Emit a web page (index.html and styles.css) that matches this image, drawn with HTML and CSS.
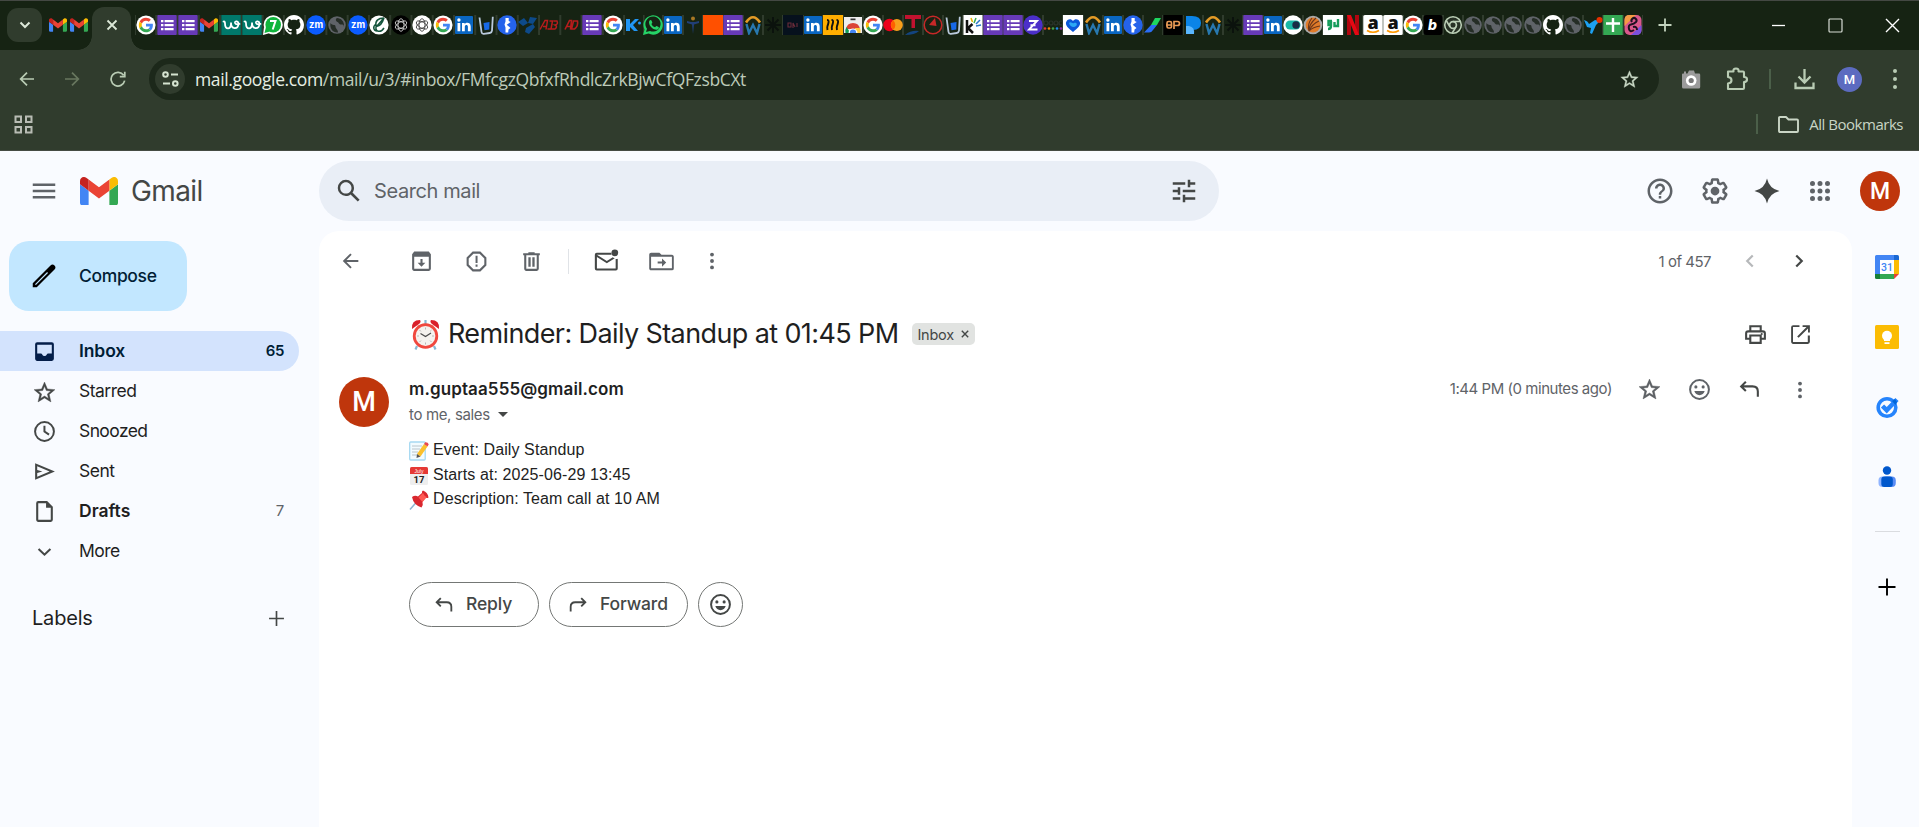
FILE: index.html
```html
<!DOCTYPE html>
<html lang="en">
<head>
<meta charset="utf-8">
<title>Reminder: Daily Standup at 01:45 PM - Gmail</title>
<link rel="stylesheet" href="styles.css">
</head>
<body>
<svg class="sprite" aria-hidden="true">
  <symbol id="gmail" viewBox="52 42 88 66"><path fill="#4285f4" d="M58 108h14V74L52 59v43c0 3.32 2.69 6 6 6"/><path fill="#34a853" d="M120 108h14c3.32 0 6-2.69 6-6V59l-20 15"/><path fill="#fbbc04" d="M120 48v26l20-15v-8c0-7.42-8.47-11.65-14.4-7.2"/><path fill="#ea4335" d="M72 74V48l24 18 24-18v26L96 92"/><path fill="#c5221f" d="M52 51v8l20 15V48l-5.6-4.2c-5.94-4.45-14.4-.22-14.4 7.2"/></symbol>
  <symbol id="f-gmail" viewBox="0 0 20 20"><use href="#gmail" x="1" y="2" width="18" height="16"/></symbol>
  <symbol id="f-google" viewBox="0 0 20 20"><circle cx="10" cy="10" r="9.6" fill="#fff"/><g transform="translate(2.8 2.8) scale(.3)"><path fill="#ea4335" d="M24 9.5c3.54 0 6.71 1.22 9.21 3.6l6.85-6.85C35.9 2.38 30.47 0 24 0 14.62 0 6.51 5.38 2.56 13.22l7.98 6.19C12.43 13.72 17.74 9.5 24 9.5z"/><path fill="#4285f4" d="M46.98 24.55c0-1.57-.15-3.09-.38-4.55H24v9.02h12.94c-.58 2.96-2.26 5.48-4.78 7.18l7.73 6c4.51-4.18 7.09-10.36 7.09-17.65z"/><path fill="#fbbc05" d="M10.53 28.59c-.48-1.45-.76-2.99-.76-4.59s.27-3.14.76-4.59l-7.98-6.19C.92 16.46 0 20.12 0 24c0 3.88.92 7.54 2.56 10.78l7.97-6.19z"/><path fill="#34a853" d="M24 48c6.48 0 11.93-2.13 15.89-5.81l-7.73-6c-2.15 1.45-4.92 2.3-8.16 2.3-6.26 0-11.57-4.22-13.47-9.91l-7.98 6.19C6.51 42.62 14.62 48 24 48z"/></g></symbol>
  <symbol id="f-forms" viewBox="0 0 20 20"><rect x=".3" width="19.4" height="20" rx=".8" fill="#673ab7"/><path fill="#fff" d="M4 5h2.4v2.2H4zM7.6 5h9v2.2h-9zM4 9h2.4v2.2H4zM7.6 9h9v2.2h-9zM4 13h2.4v2.2H4zM7.6 13h9v2.2h-9z"/></symbol>
  <symbol id="f-teal" viewBox="0 0 20 20"><rect x=".3" width="19.4" height="20" fill="#00796b"/><path fill="none" stroke="#fff" stroke-width="1.8" stroke-linecap="round" d="M2.500 6.500q1.500-.5 1.500 2c0 6.500 6 6.500 6 .5V7.500c0 7.500 7 7 7.500 1.500.2-3-4-3.500-3.500-1q.8 2 4.500 1"/></symbol>
  <symbol id="f-seven" viewBox="0 0 20 20"><circle cx="10.2" cy="9.8" r="9.6" fill="#fff"/><path fill="#fff" d="M1 12L0 20l7-2z"/><circle cx="10.2" cy="9.8" r="7.8" fill="#10b53c"/><path fill="#10b53c" d="M3 12l-1.500 6 5.500-1.500z"/><path fill="none" stroke="#fff" stroke-width="2" d="M7 6h5.500l-2.800 8.500"/></symbol>
  <symbol id="f-github" viewBox="0 0 16 16"><path fill="#fff" d="M8 0C3.58 0 0 3.58 0 8c0 3.54 2.29 6.53 5.47 7.59.4.07.55-.17.55-.38 0-.19-.01-.82-.01-1.49-2.01.37-2.53-.49-2.69-.94-.09-.23-.48-.94-.82-1.13-.28-.15-.68-.52-.01-.53.63-.01 1.08.58 1.23.82.72 1.21 1.87.87 2.33.66.07-.52.28-.87.51-1.07-1.78-.2-3.64-.89-3.64-3.95 0-.87.31-1.59.82-2.15-.08-.2-.36-1.02.08-2.12 0 0 .67-.21 2.2.82.64-.18 1.32-.27 2-.27s1.36.09 2 .27c1.53-1.04 2.2-.82 2.2-.82.44 1.1.16 1.92.08 2.12.51.56.82 1.27.82 2.15 0 3.07-1.87 3.75-3.65 3.95.29.25.54.73.54 1.48 0 1.07-.01 1.93-.01 2.2 0 .21.15.46.55.38A8.013 8.013 0 0016 8c0-4.42-3.58-8-8-8z"/></symbol>
  <symbol id="f-zm" viewBox="0 0 20 20"><circle cx="10" cy="10" r="9.7" fill="#0b5cff"/><text x="10" y="13.2" text-anchor="middle" font-family="Inter" font-size="9.5" font-weight="700" fill="#fff">zm</text></symbol>
  <symbol id="f-globe" viewBox="0 0 20 20"><circle cx="10" cy="10" r="8.8" fill="#5f6368"/><path fill="#252d26" d="M3.500 8c2 3 5 1 5 3.500S11 14 11 17.500c-5 .5-8.500-4-7.500-9.500zM10 3c-2 1-1 3.500.5 4s1 2.500 4 2.500 2 2 2.500 2C17.500 6.500 14 3 10 3z"/></symbol>
  <symbol id="f-leaf" viewBox="0 0 20 20"><circle cx="10" cy="10" r="9.6" fill="#fff"/><path fill="none" stroke="#15553d" stroke-width="1.5" d="M15 3c-6 0-9 3-8 8 4 1 6-2 8-8L7 12c-1 5 5 6 8 1M7 9c-4 3-2 7 1 7"/></symbol>
  <symbol id="knot" viewBox="0 0 20 20"><g fill="none" stroke="currentColor" stroke-width=".8"><ellipse cx="10" cy="10" rx="3" ry="6.3"/><ellipse cx="10" cy="10" rx="3" ry="6.3" transform="rotate(60 10 10)"/><ellipse cx="10" cy="10" rx="3" ry="6.3" transform="rotate(120 10 10)"/></g></symbol>
  <symbol id="f-ai-dark" viewBox="0 0 20 20"><circle cx="10" cy="10" r="9.7" fill="#000"/><use href="#knot" color="#ddd"/></symbol>
  <symbol id="f-ai-light" viewBox="0 0 20 20"><circle cx="10" cy="10" r="9.7" fill="#fff"/><use href="#knot" color="#333"/></symbol>
  <symbol id="f-in" viewBox="0 0 20 20"><rect x="1" y="1" width="18" height="18" rx="1" fill="#0a66c2"/><path fill="#fff" d="M3.500 8h2.800v8.300H3.500zM8 8h2.700v1.200c1.300-2.100 6-2 6 2.200v4.900h-2.800v-4.500c0-2.400-3.100-2.200-3.100 0v4.500H8z"/><circle cx="4.9" cy="5" r="1.7" fill="#fff"/></symbol>
  <symbol id="f-book" viewBox="0 0 20 20"><path fill="none" stroke="#b9c9dc" stroke-width="1.8" d="M3.500 2.500L5.500 17q.3 2 2.300 1.800l6-.8q2-.3 2.200-2.300l.8-14"/><path fill="#1769e8" d="M7.500 8l6-1-.2 7.500-4.800.8z"/></symbol>
  <symbol id="f-kcircle" viewBox="0 0 20 20"><circle cx="10" cy="10" r="9.7" fill="#2563eb"/><path fill="#fff" d="M8.500 3h3.200v3l2 1-4 2.700 3.800 3.300-2 1.500-.3 3H8.500v-5l-1-3 1-3z"/></symbol>
  <symbol id="f-shard" viewBox="0 0 20 20"><path fill="#0d4a8a" d="M0 7l6-4 4 5-5 3zM12 2l7 1-4 6-5-1zM8 13l7-4 2 3-6 7-4-2z"/></symbol>
  <symbol id="f-redone" viewBox="0 0 20 20"><g fill="none" stroke="#b71c1c" stroke-width="1.5"><path d="M1 14.500L6 5.500h2.500l-1.500 9M4 11.500h4M10.500 6h3l-1.500 8H8.500M14.500 6h3.500q1.500 3.500-2 4 3 1.500 0 4h-3.500"/></g></symbol>
  <symbol id="f-redtwo" viewBox="0 0 20 20"><g fill="none" stroke="#b71c1c" stroke-width="1.6"><path d="M4 14.500L8.500 5.500H10.500l-1 9M6 11.500h4M12.500 6l-2 8h3q4-3 3-8z"/></g></symbol>
  <symbol id="f-k" viewBox="0 0 20 20"><path fill="#2196f3" d="M2 4h4v5l5-5h4L9 10l5 6H10l-4-4v4H2z"/><circle cx="15.5" cy="8" r="1.5" fill="#2196f3"/></symbol>
  <symbol id="f-wa" viewBox="0 0 20 20"><path fill="#25d366" d="M0 20l1.500-5.500A9.700 9.700 0 1 1 5.600 18.600z"/><path fill="#162313" d="M3 17l1-3.300A7.600 7.600 0 1 1 7 16z"/><path fill="#25d366" d="M6.200 6c1-1.500 2-1.300 2.400-.2l.7 1.600c.2.700-1 1.300-.9 1.600 1 1.900 2 2.700 3.600 3.300.5.100 1-1.400 1.600-1.200l2 1c.8.300-.1 2.500-1.700 2.700C9.500 15 5 10 6.200 6z"/></symbol>
  <symbol id="f-person" viewBox="0 0 20 20"><circle cx="10" cy="3.5" r="2" fill="#a97824"/><path fill="#213f78" d="M4 6l4 1h4l4-1v2l-5 1.500L10 19 9 9.500 4 8z"/></symbol>
  <symbol id="f-orange" viewBox="0 0 20 20"><path fill="#ff5000" d="M0 0h20v20H0z"/></symbol>
  <symbol id="f-w" viewBox="0 0 20 20"><path fill="none" stroke="#e39a26" stroke-width="2.6" d="M3 7.500Q10-3 17 7.500"/><path fill="none" stroke="#2878ae" stroke-width="2.4" d="M3.500 9l2.500 9 4-8 4 8 2.500-9"/></symbol>
  <symbol id="f-star8" viewBox="0 0 20 20"><path stroke="#0b120d" stroke-width="2" d="M10 2v16M2 10h16M4.500 4.500l11 11M15.500 4.500l-11 11"/></symbol>
  <symbol id="f-navy" viewBox="0 0 20 20"><path fill="#06111d" d="M0 0h20v20H0z"/><path stroke="#6b2c3a" stroke-width="1.1" fill="none" d="M5 8h3v4H5zM10 13V8l2 4M14 8v4"/></symbol>
  <symbol id="f-yellow" viewBox="0 0 20 20"><path fill="#ffae00" d="M0 0h20v20H0z"/><path fill="none" stroke="#111" stroke-width="1.9" d="M4 5q2 0 1.500 2.500T4.500 11t0 4M8.500 5q2 0 1.500 2.500T9 11t0 4M13.500 5q2 0 1.500 2.500t-1 3.500 0 4"/></symbol>
  <symbol id="f-store" viewBox="0 0 20 20"><path fill="#eee" d="M1 2h18v16H1z"/><path fill="#333" d="M7.500 3.500h5v1.700h-5z"/><path fill="#db4437" d="M3 14q1-6 7-6t7 6z"/><path fill="#0f9d58" d="M2.500 18q-.5-4 1-6l4 6z"/><path fill="#ffcd40" d="M17.500 18q.5-3-.5-5h-5v5z"/><path fill="#fff" d="M5.500 18a4.500 4.500 0 0 1 9 0z"/><path fill="#4285f4" d="M6.800 18a3.200 3.400 0 0 1 6.400 0z"/></symbol>
  <symbol id="f-mc" viewBox="0 0 20 20"><circle cx="6.5" cy="10" r="6.2" fill="#eb001b"/><circle cx="13.8" cy="10" r="6" fill="#f79e1b"/><path fill="#ff5f00" d="M10.100 5.300a6 6 0 0 1 0 9.400 6 6 0 0 1 0-9.400z"/></symbol>
  <symbol id="f-t" viewBox="0 0 20 20"><path fill="#c1122f" d="M2 0h16v4h-6v9H8.500V4H2z"/><path fill="#13447f" d="M2 20q6-5 14-4-4 4-14 4z"/></symbol>
  <symbol id="f-dial" viewBox="0 0 20 20"><circle cx="10" cy="10" r="8.8" fill="none" stroke="#c62828" stroke-width="1.5"/><path fill="#c62828" d="M6 10l6-7 1.500 8z"/></symbol>
  <symbol id="f-kwhite" viewBox="0 0 20 20"><path fill="#fff" d="M.5 0h19v20H.500z"/><path fill="none" stroke="#111" stroke-width="2.5" d="M4 5v13M9.500 9L5 13l5 5"/><path stroke="#e8b400" stroke-width="1.5" d="M8 3l1.500 4"/><path stroke="#36a852" stroke-width="1.5" d="M13 3l-2 5"/><path stroke="#2b77c9" stroke-width="1.5" d="M17 5l-4 4M18 10l-5 1"/></symbol>
  <symbol id="f-z" viewBox="0 0 20 20"><circle cx="10" cy="10" r="9.7" fill="#4b2fc9"/><path fill="none" stroke="#fff" stroke-width="1.9" d="M6 6h8l-8 8.500h8.500M7.500 10.200h5"/></symbol>
  <symbol id="f-dots" viewBox="0 0 20 20"><g fill="none" stroke="#2b332b" stroke-width="1.2"><circle cx="3" cy="8" r="2"/><circle cx="8" cy="8" r="2"/><circle cx="13" cy="8" r="2"/><circle cx="18" cy="8" r="2"/></g><circle cx="2" cy="13.5" r="1.3" fill="#e53935"/><circle cx="6" cy="13.5" r="1.3" fill="#fb8c00"/><circle cx="10" cy="13.5" r="1.3" fill="#43a047"/><circle cx="14" cy="13.5" r="1.3" fill="#1e88e5"/><circle cx="18" cy="13.5" r="1.3" fill="#8e24aa"/></symbol>
  <symbol id="f-heart" viewBox="0 0 20 20"><path fill="#fff" d="M0 0h20v20H0z"/><path fill="#0b57d9" d="M10 17C5 13 2.500 10.500 3 7.500 3.800 4 8 3 10 6c2-3 6.200-2 7 1.500.5 3-2 5.500-7 9.500z"/><path fill="#2ba8f5" d="M6 8c2-2 3 1 5 0s4 1 2 3-6 1-7-3z"/></symbol>
  <symbol id="f-slash" viewBox="0 0 20 20"><path fill="#1ed760" d="M12 3h6l-4 7H8z"/><path fill="#2a6df4" d="M8 10h6l-4 5q-1.500 2.500-4 2.500H1z"/></symbol>
  <symbol id="f-op" viewBox="0 0 20 20"><path fill="#000" d="M.3 0h19.400v20H.300z"/><g fill="none" stroke="#e89a55" stroke-width="1.7"><rect x="4" y="6.5" width="4.5" height="6.5" rx="1.5"/><path d="M11 14V6.500h3.500q2 0 2 2t-2 2H11M3 10h6"/></g></symbol>
  <symbol id="f-drop" viewBox="0 0 20 20"><path fill="#0b84e8" d="M3 1h6q9 0 9 7t-8 7H3z"/><path fill="#5ab7ff" d="M3 11h3q6 1 5 8H3z"/></symbol>
  <symbol id="f-toggle" viewBox="0 0 20 20"><circle cx="10" cy="10" r="9.7" fill="#fff"/><rect x="2.5" y="5.5" width="15" height="9" rx="4.5" fill="#19b8a6"/><circle cx="13" cy="10" r="3.7" fill="#182c45"/></symbol>
  <symbol id="f-ball" viewBox="0 0 20 20"><circle cx="10" cy="10" r="9.3" fill="#aaa"/><circle cx="10" cy="10" r="7.4" fill="#e17b29"/><path fill="none" stroke="#6c371a" stroke-width="1.1" d="M6 16Q6 9 13 3M6 16Q9 9 16 6M6 16q4-4 11-5M6 16Q4 9 9 3"/></symbol>
  <symbol id="f-ga" viewBox="0 0 20 20"><path fill="#fff" d="M0 0h20v20H0z"/><path fill="none" stroke="#159c5b" stroke-width="2.4" d="M9 6H5.500v4H8V6v5q0 3-3 3M15 4v7h-3.500V7"/></symbol>
  <symbol id="f-n" viewBox="0 0 20 20"><path fill="#b1060f" d="M4 0h4v20H4zM12 0h4v20h-4z"/><path fill="#e50914" d="M4 0h4l8 20h-4z"/></symbol>
  <symbol id="f-a" viewBox="0 0 20 20"><rect x=".3" width="19.4" height="20" rx="1.5" fill="#fff"/><text x="10" y="14" text-anchor="middle" font-family="Open Sans" font-weight="800" font-size="18" fill="#111">a</text><path fill="none" stroke="#f90" stroke-width="1.7" d="M4 15.500q6 3.500 12 0"/></symbol>
  <symbol id="f-b" viewBox="0 0 20 20"><rect x=".5" width="19" height="20" rx="3" fill="#000"/><text x="9.5" y="15" text-anchor="middle" font-family="Inter" font-style="italic" font-weight="800" font-size="14" fill="#fff">b</text></symbol>
  <symbol id="f-chrome" viewBox="0 0 20 20"><circle cx="10" cy="10" r="8.3" fill="#263024" stroke="#b9ccb4" stroke-width="1.6"/><circle cx="10" cy="10" r="3.4" fill="none" stroke="#b9ccb4" stroke-width="1.7"/><path stroke="#b9ccb4" stroke-width="1.6" d="M10 6.500h7.500M7 11.800L3.200 5.500M13 11.800L9.200 18"/></symbol>
  <symbol id="f-bird" viewBox="0 0 20 20"><path fill="#1da1f2" d="M1 5q4 1 5 4l6-4 5 1-4 4-4 9-2-1 1-5-4-1z"/><circle cx="16.5" cy="5" r="3" fill="#e53000"/></symbol>
  <symbol id="f-cross" viewBox="0 0 20 20"><path fill="#34a853" d="M.300 0h19.400v20H.300z"/><path stroke="#fff" stroke-width="2.4" d="M10 3v14M3 8.500h14"/></symbol>
  <symbol id="f-multi" viewBox="0 0 20 20"><rect x="1.5" width="17" height="20" rx="5" fill="#d9588c"/><path fill="#f59a45" d="M6 0h7L1.500 11V5Q1.500 0 6 0z"/><path fill="#7a50dd" d="M18.500 10v5q0 5-5 5H8z"/><path fill="none" stroke="#1c1020" stroke-width="2" d="M9 7a2.500 2.500 0 1 1 4 0q-2 2-5 2.500t-2 4.500 5 1M10 12q4-1 4 3"/></symbol>

  <symbol id="star" viewBox="0 0 24 24"><path stroke="currentColor" stroke-width=".4" d="M22 9.240l-7.190-.62L12 2 9.190 8.630 2 9.240l5.460 4.730L5.820 21 12 17.270 18.180 21l-1.630-7.030L22 9.240zM12 15.400l-3.760 2.270 1-4.280-3.320-2.880 4.380-.38L12 6.100l1.710 4.040 4.380.38-3.320 2.880 1 4.280L12 15.400z"/></symbol>
  <symbol id="smile" viewBox="0 0 24 24"><path d="M12 2a10 10 0 1 0 0 20 10 10 0 0 0 0-20zm0 18.100a8.100 8.100 0 1 1 0-16.200 8.100 8.100 0 0 1 0 16.200z"/><circle cx="8.5" cy="9.5" r="1.5"/><circle cx="15.5" cy="9.5" r="1.5"/><path d="M7 13.500h10c-.8 2.400-2.600 4-5 4s-4.200-1.600-5-4z"/></symbol>
  <symbol id="reply" viewBox="0 0 24 24"><path fill="none" stroke="currentColor" stroke-width="2" d="M8.500 4.500L4 9l4.500 4.500M4 9h11q5 0 5 5v5"/></symbol>
  <symbol id="more" viewBox="0 0 24 24"><circle cx="12" cy="5" r="2.1"/><circle cx="12" cy="12" r="2.1"/><circle cx="12" cy="19" r="2.1"/></symbol>
  <symbol id="back" viewBox="0 0 24 24"><path fill="none" stroke="currentColor" stroke-width="2.1" d="M20 12H5M12 4.500L4.500 12l7.500 7.500"/></symbol>
  <symbol id="chev" viewBox="0 0 24 24"><path fill="none" stroke="currentColor" stroke-width="2.4" d="M9 6l6 6-6 6"/></symbol>
  <symbol id="plus" viewBox="0 0 24 24"><path fill="none" stroke="currentColor" stroke-width="1.9" d="M12 3.500v17M3.500 12h17"/></symbol>
</svg>

<div class="browser">
  <div class="tabstrip">
    <span class="tabmenu"><svg width="14" height="14" viewBox="0 0 14 14"><path fill="none" stroke="#dce8d8" stroke-width="2" d="M2.500 4.500L7 9l4.500-4.500"/></svg></span>
    <div class="pinned"><svg class="fav"><use href="#f-gmail"/></svg><svg class="fav"><use href="#f-gmail"/></svg></div>
    <div class="active"><svg width="12" height="12" viewBox="0 0 12 12"><path stroke="#dce8d8" stroke-width="1.8" d="M1.500 1.500l9 9M10.500 1.500l-9 9"/></svg></div>
    <div class="tabs wide">
      <svg class="fav"><use href="#f-google"/></svg><svg class="fav"><use href="#f-forms"/></svg><svg class="fav"><use href="#f-forms"/></svg><svg class="fav"><use href="#f-gmail"/></svg><svg class="fav"><use href="#f-teal"/></svg><svg class="fav"><use href="#f-teal"/></svg><svg class="fav"><use href="#f-seven"/></svg><svg class="fav"><use href="#f-github"/></svg><svg class="fav"><use href="#f-zm"/></svg><svg class="fav"><use href="#f-globe"/></svg><svg class="fav"><use href="#f-zm"/></svg><svg class="fav"><use href="#f-leaf"/></svg><svg class="fav"><use href="#f-ai-dark"/></svg><svg class="fav"><use href="#f-ai-light"/></svg><svg class="fav"><use href="#f-google"/></svg><svg class="fav"><use href="#f-in"/></svg><svg class="fav"><use href="#f-book"/></svg><svg class="fav"><use href="#f-kcircle"/></svg><svg class="fav"><use href="#f-shard"/></svg><svg class="fav"><use href="#f-redone"/></svg><svg class="fav"><use href="#f-redtwo"/></svg><svg class="fav"><use href="#f-forms"/></svg><svg class="fav"><use href="#f-google"/></svg><svg class="fav"><use href="#f-k"/></svg>
    </div>
    <div class="tabs narrow">
      <svg class="fav"><use href="#f-wa"/></svg><svg class="fav"><use href="#f-in"/></svg><svg class="fav"><use href="#f-person"/></svg><svg class="fav"><use href="#f-orange"/></svg><svg class="fav"><use href="#f-forms"/></svg><svg class="fav"><use href="#f-w"/></svg><svg class="fav"><use href="#f-star8"/></svg><svg class="fav"><use href="#f-navy"/></svg><svg class="fav"><use href="#f-in"/></svg><svg class="fav"><use href="#f-yellow"/></svg><svg class="fav"><use href="#f-store"/></svg><svg class="fav"><use href="#f-google"/></svg><svg class="fav"><use href="#f-mc"/></svg><svg class="fav"><use href="#f-t"/></svg><svg class="fav"><use href="#f-dial"/></svg><svg class="fav"><use href="#f-book"/></svg><svg class="fav"><use href="#f-kwhite"/></svg><svg class="fav"><use href="#f-forms"/></svg><svg class="fav"><use href="#f-forms"/></svg><svg class="fav"><use href="#f-z"/></svg><svg class="fav"><use href="#f-dots"/></svg><svg class="fav"><use href="#f-heart"/></svg><svg class="fav"><use href="#f-w"/></svg><svg class="fav"><use href="#f-in"/></svg><svg class="fav"><use href="#f-kcircle"/></svg><svg class="fav"><use href="#f-slash"/></svg><svg class="fav"><use href="#f-op"/></svg><svg class="fav"><use href="#f-drop"/></svg><svg class="fav"><use href="#f-w"/></svg><svg class="fav"><use href="#f-star8"/></svg><svg class="fav"><use href="#f-forms"/></svg><svg class="fav"><use href="#f-in"/></svg><svg class="fav"><use href="#f-toggle"/></svg><svg class="fav"><use href="#f-ball"/></svg><svg class="fav"><use href="#f-ga"/></svg><svg class="fav"><use href="#f-n"/></svg><svg class="fav"><use href="#f-a"/></svg><svg class="fav"><use href="#f-a"/></svg><svg class="fav"><use href="#f-google"/></svg><svg class="fav"><use href="#f-b"/></svg><svg class="fav"><use href="#f-chrome"/></svg><svg class="fav"><use href="#f-globe"/></svg><svg class="fav"><use href="#f-globe"/></svg><svg class="fav"><use href="#f-globe"/></svg><svg class="fav"><use href="#f-globe"/></svg><svg class="fav"><use href="#f-github"/></svg><svg class="fav"><use href="#f-globe"/></svg><svg class="fav"><use href="#f-bird"/></svg><svg class="fav"><use href="#f-cross"/></svg><svg class="fav"><use href="#f-multi"/></svg>
    </div>
    <svg class="newtab" viewBox="0 0 14 14"><path stroke="#c3d3be" stroke-width="1.8" d="M7 .5v13M.5 7h13"/></svg>
    <div class="winctl">
      <svg viewBox="0 0 16 16"><path stroke="#fff" stroke-width="1.3" d="M1.500 8.500h13"/></svg>
      <svg viewBox="0 0 16 16"><rect x="1.5" y="2" width="13" height="13" rx="1" fill="none" stroke="#d8ddd6" stroke-width="1.2"/></svg>
      <svg viewBox="0 0 16 16"><path stroke="#fff" stroke-width="1.4" d="M1.500 2l13 13M14.500 2l-13 13"/></svg>
    </div>
  </div>

  <div class="toolbar">
    <div class="nav">
      <svg viewBox="0 0 24 24" color="#b9ccb4"><path fill="none" stroke="currentColor" stroke-width="2.6" d="M22.500 12H3.500M12 2.500L2.500 12l9.500 9.500"/></svg>
      <svg viewBox="0 0 24 24" color="#68775f"><path fill="none" stroke="currentColor" stroke-width="2.6" d="M1.500 12h19M12 2.500l9.500 9.500-9.500 9.500"/></svg>
      <svg viewBox="0 0 24 24" color="#b9ccb4"><path fill="none" stroke="currentColor" stroke-width="2.6" d="M22 14.500A10.300 10.300 0 1 1 20.500 6.500M22.200 1v7.500h-7.500"/></svg>
    </div>
    <div class="omnibox">
      <span class="site"><svg width="17" height="16" viewBox="0 0 17 16" fill="none" stroke="#d5e3d0" stroke-width="2"><circle cx="3.5" cy="3.5" r="2.3"/><path d="M9 3.500h7M1 12.500h7"/><circle cx="13.3" cy="12.5" r="2.3"/></svg></span>
      <span class="url"><b>mail.google.com</b>/mail/u/3/#inbox/FMfcgzQbfxfRhdlcZrkBjwCfQFzsbCXt</span>
      <svg class="bookmark"><use href="#star"/></svg>
    </div>
    <div class="actions">
      <svg width="20" height="20" viewBox="0 0 20 20"><path fill="#9b9b9b" d="M1 5.500q0-1 1-1h1v-2h2v2h1.500L8 1.500h5l1 3h4q1.200 0 1.200 1.200V18q0 1.500-1.500 1.500H2.500Q1 19.500 1 18z"/><circle cx="10.2" cy="11.5" r="5.3" fill="#fff"/><circle cx="10.2" cy="11.5" r="2.6" fill="#777"/></svg>
      <svg width="22" height="24" viewBox="0 0 22 24"><path fill="none" stroke="#b9ccb4" stroke-width="2.1" stroke-linejoin="round" d="M2 4.500h5.500q-.5-3 2.500-3t2.500 3h4.500q1 0 1 1V10q3 0 3 2.500T18 15v6q0 1-1 1H2v-5.500q3.500-.5 3.500-3.300T2 10z"/></svg>
      <i class="vline"></i>
      <svg width="21" height="22" viewBox="0 0 21 22"><path fill="none" stroke="#b9ccb4" stroke-width="2.3" d="M10.500 1v13.500M4.500 8.500l6 6 6-6M1.500 14.500V20h18v-5.500"/></svg>
      <span class="profile">M</span>
      <svg width="20" height="22" viewBox="0 0 20 22" fill="#b9ccb4"><circle cx="10" cy="3" r="2"/><circle cx="10" cy="11" r="2"/><circle cx="10" cy="19" r="2"/></svg>
    </div>
  </div>

  <div class="bookmarks">
    <svg width="19" height="19" viewBox="0 0 19 19" fill="none" stroke="#b8bcb4" stroke-width="2"><path d="M1.500 1.500h5.500v5.500H1.500zM12 1.500h5.500v5.500H12zM1.500 12h5.500v5.500H1.500zM12 12h5.500v5.500H12z"/></svg>
    <i class="vline"></i>
    <svg class="folder" width="21" height="17" viewBox="0 0 21 17"><path fill="none" stroke="#c9d5c5" stroke-width="1.9" stroke-linejoin="round" d="M1 2q0-1 1-1h6l2.500 2.500H19q1 0 1 1V15q0 1-1 1H2q-1 0-1-1z"/></svg>
    <span class="allbm">All Bookmarks</span>
  </div>
</div>

<div class="app">
  <header class="top">
    <div class="brand">
      <svg class="i30 menu" viewBox="0 0 24 24"><path d="M3 18h18v-2H3v2zm0-5h18v-2H3v2zm0-7v2h18V6H3z"/></svg>
      <svg class="logo"><use href="#gmail"/></svg>
      <span class="wordmark">Gmail</span>
    </div>
    <div class="search">
      <svg class="i30" viewBox="0 0 24 24"><path d="M20.490 19l-5.730-5.730C15.530 12.200 16 10.910 16 9.500A6.500 6.500 0 1 0 9.500 16c1.410 0 2.700-.47 3.770-1.240L19 20.490 20.490 19zM5 9.500C5 7.010 7.010 5 9.500 5S14 7.010 14 9.500 11.990 14 9.500 14 5 11.990 5 9.500z"/></svg>
      <span>Search mail</span>
      <svg class="i30" viewBox="0 0 24 24"><path d="M3 17v2h6v-2H3zM3 5v2h10V5H3zm10 16v-2h8v-2h-8v-2h-2v6h2zM7 9v2H3v2h4v2h2V9H7zm14 4v-2H11v2h10zm-6-4h2V7h4V5h-4V3h-2v6z"/></svg>
    </div>
    <div class="hicons">
      <svg class="i30" viewBox="0 0 24 24"><path d="M11 18h2v-2h-2v2zm1-16C6.480 2 2 6.480 2 12s4.480 10 10 10 10-4.480 10-10S17.520 2 12 2zm0 18c-4.410 0-8-3.590-8-8s3.590-8 8-8 8 3.590 8 8-3.590 8-8 8zm0-14c-2.210 0-4 1.790-4 4h2c0-1.100.9-2 2-2s2 .9 2 2c0 2-3 1.750-3 5h2c0-2.250 3-2.500 3-5 0-2.210-1.790-4-4-4z"/></svg>
      <svg class="i30" viewBox="0 0 24 24"><path d="M13.850 22.250h-3.700c-.74 0-1.360-.54-1.450-1.270l-.27-1.890c-.27-.14-.53-.29-.79-.46l-1.800.72c-.7.26-1.470-.03-1.810-.65L2.200 15.530c-.35-.66-.2-1.440.36-1.880l1.530-1.190c-.01-.15-.02-.3-.02-.46 0-.15.01-.31.02-.46l-1.520-1.190c-.59-.45-.74-1.260-.37-1.880l1.850-3.190c.34-.62 1.110-.9 1.790-.63l1.810.73c.26-.17.52-.32.78-.46l.27-1.910c.09-.7.71-1.250 1.440-1.250h3.700c.74 0 1.360.54 1.450 1.270l.27 1.890c.27.14.53.29.79.46l1.800-.72c.71-.26 1.480.03 1.820.65l1.840 3.180c.36.66.2 1.440-.36 1.880l-1.520 1.190c.01.15.02.3.02.46s-.01.31-.02.46l1.520 1.190c.56.45.72 1.230.37 1.860l-1.860 3.220c-.34.62-1.110.9-1.800.63l-1.800-.72c-.26.17-.52.32-.78.46l-.27 1.910c-.1.68-.72 1.220-1.460 1.220zm-3.230-2h2.760l.37-2.550.53-.22c.44-.18.88-.44 1.340-.78l.45-.34 2.380.96 1.380-2.400-2.030-1.580.07-.56c.03-.26.06-.51.06-.78s-.03-.53-.06-.78l-.07-.56 2.030-1.580-1.390-2.400-2.390.96-.45-.35c-.42-.32-.87-.58-1.330-.77l-.52-.22-.37-2.550h-2.760l-.37 2.550-.53.210c-.44.190-.88.440-1.340.790l-.45.330-2.380-.95-1.390 2.390 2.030 1.580-.07.560a7 7 0 0 0-.06.790c0 .260.020.530.060.780l.070.560-2.030 1.580 1.380 2.400 2.390-.960.450.350c.430.330.860.580 1.330.770l.530.220.380 2.550z"/><circle cx="12" cy="12" r="3.5"/></svg>
      <svg class="i30 dark" viewBox="0 0 24 24"><path d="M12 2Q13.800 10.200 22 12q-8.200 1.800-10 10Q10.200 13.800 2 12 10.200 10.200 12 2z"/></svg>
      <svg class="i30" viewBox="0 0 24 24"><path d="M6 8a2 2 0 1 0 0-4 2 2 0 0 0 0 4zm6 12a2 2 0 1 0 0-4 2 2 0 0 0 0 4zm-6 0a2 2 0 1 0 0-4 2 2 0 0 0 0 4zm0-6a2 2 0 1 0 0-4 2 2 0 0 0 0 4zm6 0a2 2 0 1 0 0-4 2 2 0 0 0 0 4zm4-8a2 2 0 1 0 4 0 2 2 0 0 0-4 0zm-4 2a2 2 0 1 0 0-4 2 2 0 0 0 0 4zm6 6a2 2 0 1 0 0-4 2 2 0 0 0 0 4zm0 6a2 2 0 1 0 0-4 2 2 0 0 0 0 4z"/></svg>
      <span class="avatar small">M</span>
    </div>
  </header>

  <div class="main">
    <nav class="side">
      <button class="compose"><svg class="i30" viewBox="0 0 24 24"><path fill="#000" d="M20.400 3.600a2.300 2.300 0 0 0-3.200 0L3 17.800V21h3.200L20.400 6.800a2.300 2.300 0 0 0 0-3.200zM5.500 19.200l-.7-.7L14.500 8.800l.7.7z"/></svg><span>Compose</span></button>
      <a class="row current"><svg class="i25" viewBox="0 0 24 24"><path d="M19 3H5a2 2 0 0 0-2 2v14c0 1.100.9 2 2 2h14a2 2 0 0 0 2-2V5a2 2 0 0 0-2-2zm0 11h-3.500q-1 0-1.300.8a2.400 2.400 0 0 1-4.400 0Q9.500 14 8.500 14H5V5.500h14z"/></svg><span>Inbox</span><em>65</em></a>
      <a class="row"><svg class="i25 low"><use href="#star"/></svg><span>Starred</span></a>
      <a class="row"><svg class="i25" viewBox="0 0 24 24"><path d="M12 2a10 10 0 1 0 0 20 10 10 0 0 0 0-20zm0 18.100a8.100 8.100 0 1 1 0-16.200 8.100 8.100 0 0 1 0 16.200zM11 6.500v6l4.800 3.300 1.100-1.600-4-2.700v-5z"/></svg><span class="snoozed">Snoozed</span></a>
      <a class="row"><svg class="i25" viewBox="0 0 24 24"><path d="M3 4v16l19-8L3 4zm2 3l11.900 5L5 17v-3.500l5-1.500-5-1.500V7z"/></svg><span>Sent</span></a>
      <a class="row bold"><svg class="i25" viewBox="0 0 24 24"><path d="M14.500 2H6a2 2 0 0 0-2 2v16c0 1.100.9 2 2 2h12a2 2 0 0 0 2-2V7.500L14.500 2zM18 20H6V4h7.500v4.500H18V20z"/></svg><span>Drafts</span><em>7</em></a>
      <a class="row"><svg class="i25" viewBox="0 0 24 24"><path fill="none" stroke="currentColor" stroke-width="2" d="M6.300 9.500L12 15l5.700-5.500"/></svg><span>More</span></a>
      <div class="labels"><span>Labels</span><svg class="lplus"><use href="#plus"/></svg></div>
    </nav>

    <section class="panel">
      <div class="mailbar">
        <div class="left">
          <svg class="i22"><use href="#back"/></svg>
          <svg class="i25 gap" viewBox="0 0 24 24"><path d="M19 2.500H5L3 5v14c0 1.100.9 2 2 2h14a2 2 0 0 0 2-2V5zM5 19V7.500h14V19zm6-9.500v3.700H8.300L12 17l3.700-3.800H13V9.500z"/></svg>
          <svg class="i25" viewBox="0 0 24 24"><path d="M15.730 2.500H8.270L2.500 8.270v7.460l5.770 5.770h7.460l5.770-5.770V8.270L15.730 2.500zM19.500 14.900l-4.600 4.600H9.100l-4.600-4.600V9.100l4.600-4.600h5.800l4.600 4.600v5.800z"/><path d="M11.100 6.500h1.900v7h-1.900zM11.100 15h1.900v2h-1.900z"/></svg>
          <svg class="i25" viewBox="0 0 24 24"><path d="M15 4V3H9v1H4v2h1v13c0 1.100.9 2 2 2h10a2 2 0 0 0 2-2V6h1V4h-5zm2 15H7V6h10v13zM9 8h2.200v9H9zM12.800 8H15v9h-2.200z"/></svg>
          <i class="divider"></i>
          <svg class="i25 dark" viewBox="0 0 24 24"><path d="M22 9v9.500a1.800 1.800 0 0 1-1.800 1.800H1.800A1.800 1.800 0 0 1 0 18.500V5.200a1.800 1.800 0 0 1 1.800-1.800h14.400q-.4 1 0 1.900H2l9.500 6 5.800-3.700q.9.800 1.900.9L11.500 13.500 2 7.500v11h18V9.200q1.200.3 2-.2z" transform="translate(.8 .3)"/><circle cx="20" cy="3.7" r="3.2"/></svg>
          <svg class="i25" viewBox="0 0 24 24"><path d="M21.500 5.500H12l-2-2H2a1.800 1.800 0 0 0-1.800 1.800v13.400c0 1 .8 1.800 1.800 1.800h20a1.800 1.800 0 0 0 1.800-1.800V7.300q0-1.800-2.300-1.800zM22 18.500H2v-11h20v11zM12.500 9l4 4-4 4v-3H8.300v-2h4.200z"/></svg>
          <svg class="i22"><use href="#more"/></svg>
        </div>
        <span class="count">1 of 457</span>
        <svg class="i22 off flip"><use href="#chev"/></svg>
        <svg class="i22 next"><use href="#chev"/></svg>
      </div>

      <div class="subject">
        <svg class="clock" viewBox="0 0 29 31"><path stroke="#86b7d2" stroke-width="2.2" d="M6 27l-1.500 3.500M23 27l1.500 3.500M14.500 1v5"/><path fill="#d9202a" d="M1 10Q0 1 9 1q1.500 2-1 4zM28 10q1-9-8-9-1.500 2 1 4z"/><circle cx="14.5" cy="17" r="12.7" fill="#f0483e"/><circle cx="14.5" cy="17" r="9.9" fill="#f5f2ee"/><path stroke="#b8b8b8" stroke-width="1" d="M14.500 8.500v2M14.500 23.500v2M6 17h2M21 17h2M8.500 11l1.400 1.400M20.500 11l-1.400 1.400M8.500 23l1.400-1.400M20.500 23l-1.400-1.400"/><path fill="none" stroke="#4b4b4b" stroke-width="1.2" d="M9.500 14.500l5 3 5.500-3.500"/></svg>
        <h1>Reminder: Daily Standup at 01:45 PM</h1>
        <span class="chip">Inbox<svg width="8" height="8" viewBox="0 0 8 8"><path stroke="#444746" stroke-width="1.4" d="M.8.8l6.400 6.400M7.200.8L.8 7.200"/></svg></span>
        <div class="subicons">
          <svg class="i25 dark" viewBox="0 0 24 24"><path d="M19 8h-1V3H6v5H5a3 3 0 0 0-3 3v6h4v4h12v-4h4v-6a3 3 0 0 0-3-3zM8 5h8v3H8V5zm8 14H8v-5h8v5zm4-4h-2v-3H6v3H4v-4c0-.6.400-1 1-1h14c.6 0 1 .4 1 1v4z"/><circle cx="18" cy="11.5" r="1"/></svg>
          <svg class="i25 dark" viewBox="0 0 24 24"><path d="M19 19.200H4.800V4.800H11V3H5a2 2 0 0 0-2 2v14c0 1.100.9 2 2 2h14a2 2 0 0 0 2-2v-6h-2v6.200zM14 3v1.800h3.800l-9 9 1.400 1.400 9-9V10H21V3h-7z"/></svg>
        </div>
      </div>

      <div class="message">
        <span class="avatar">M</span>
        <div class="content">
          <div class="meta">
            <div class="who">
              <strong>m.guptaa555@gmail.com</strong>
              <div class="to"><span>to me, sales</span><i class="caret"></i></div>
            </div>
            <time>1:44 PM (0 minutes ago)</time>
            <div class="macts">
              <svg class="i25"><use href="#star"/></svg>
              <svg class="i25"><use href="#smile"/></svg>
              <svg class="i25"><use href="#reply"/></svg>
              <svg class="i22"><use href="#more"/></svg>
            </div>
          </div>
          <div class="body">
            <p><svg viewBox="0 0 20 20"><rect x=".7" y="1" width="15.5" height="18" rx="1" fill="#f2fbff" stroke="#a6d9f2" stroke-width="1.3"/><path stroke="#b9c4ca" stroke-width="1" d="M3 5h10M3 8h8M3 11h6M3 14h5"/><path fill="#fbc02d" d="M15 3l3.500 2.500-7 10L8 13z"/><path fill="#e9484d" d="M15 3l1.200-1.800q3-.2 3.500 2.400L18.500 5.500z"/><path fill="#555" d="M8 13l3.500 2.500L7.500 17z"/></svg><span>Event: Daily Standup</span></p>
            <p><svg viewBox="0 0 20 20"><rect x="1" y="1" width="18" height="18" rx="1.5" fill="#eee"/><path fill="#e53935" d="M2.500 1h15q1.500 0 1.500 1.500V8H1V2.500Q1 1 2.500 1z"/><text x="10" y="6.5" text-anchor="middle" font-family="Liberation Sans" font-size="5" fill="#fff">July</text><text x="10" y="17" text-anchor="middle" font-family="Roboto" font-weight="700" font-size="9.5" fill="#222">17</text></svg><span>Starts at: 2025-06-29 13:45</span></p>
            <p><svg viewBox="0 0 20 20"><path stroke="#8bb5cf" stroke-width="1.5" d="M1 19.500l7-8"/><path fill="#d9272e" d="M3 7q3-2 6-.5L13 3q-.5-2 1-2.500 5 2 5.500 7-1.500 1-3 0L13.500 12q1 3-1 5.500Q4.500 15 3 7z"/><path fill="#ff5a54" d="M9.500 7.500L14 3q1 3 4 4l-4.500 5z"/></svg><span>Description: Team call at 10 AM</span></p>
          </div>
          <div class="buttons">
            <button class="pill rep"><svg class="i22"><use href="#reply"/></svg><span>Reply</span></button>
            <button class="pill fwd"><svg class="i22 flip"><use href="#reply"/></svg><span>Forward</span></button>
            <button class="pill round"><svg class="i25 dark"><use href="#smile"/></svg></button>
          </div>
        </div>
      </div>
    </section>

    <aside class="rail">
      <svg viewBox="0 0 24 24"><path fill="#4285f4" d="M1.500 0H19v5H5v14H0V1.500Q0 0 1.500 0z"/><path fill="#1967d2" d="M19 0h3.500Q24 0 24 1.500V5h-5z"/><path fill="#fbbc04" d="M19 5h5v14h-5z"/><path fill="#34a853" d="M5 19h14v5H5z"/><path fill="#188038" d="M0 19h5v5H1.500Q0 24 0 22.500z"/><path fill="#ea4335" d="M19 24l5-5h-5z"/><path fill="#fff" d="M5 5h14v14H5z"/><text x="12" y="16" text-anchor="middle" font-family="Roboto" font-size="10.5" font-weight="500" fill="#4285f4">31</text></svg>
      <svg viewBox="0 0 24 24"><rect width="24" height="24" rx="1.5" fill="#fbbc04"/><circle cx="12" cy="10.8" r="5" fill="#fff"/><path fill="#fff" d="M9 13h6v3H9zM9.500 17.200h5V19h-5z"/></svg>
      <svg viewBox="0 0 24 24"><circle cx="12" cy="12.5" r="8.8" fill="none" stroke="#2684fc" stroke-width="3.6"/><path fill="none" stroke="#2684fc" stroke-width="4.5" d="M7.500 11l4.200 4.200L22 4.500"/><path fill="#0066da" d="M17 6l3.500 4 1.500-3-2-3z"/></svg>
      <svg viewBox="0 0 24 24"><circle cx="12" cy="5.5" r="4.2" fill="#0057cc"/><rect x="3.5" y="11.5" width="12" height="10.5" rx="4" fill="#8fb4ff"/><rect x="8" y="11.5" width="12.8" height="10.5" rx="4" fill="#5b8df5"/><rect x="6.3" y="11.5" width="11.5" height="10.5" rx="3" fill="#0057cc"/></svg>
      <i></i>
      <svg class="rplus" color="#000"><use href="#plus"/></svg>
    </aside>
  </div>
</div>
</body>
</html>
```
FILE: styles.css
```css
* { box-sizing: border-box; }
body { margin: 0; height: 827px; overflow: hidden; display: flex; flex-direction: column; font-family: Inter, Roboto, sans-serif; background: #f9fbff; color: #1f1f1f; }
svg { flex: none; display: block; }
.sprite { display: none; }
button { font: inherit; border: 0; background: none; padding: 0; }

/* Browser chrome */
.browser { height: 151px; flex: none; background: #303c2d; border-bottom: 1px solid #454b43; }
.tabstrip { height: 50px; background: #162313; border-top: 1px solid #444843; display: flex; align-items: center; padding: 0 0 1px 7px; }
.tabmenu { width: 35px; height: 34px; border-radius: 11px; background: #303c2d; display: flex; align-items: center; justify-content: center; }
.pinned { display: flex; margin: 0 2.5px 0 5.5px; }
.fav { width: 20px; height: 20px; }
.pinned .fav { margin: 0 .5px; }
.active { position: relative; width: 39px; height: 43px; margin-bottom: -1px; align-self: flex-end; background: #303c2d; border-radius: 12px 12px 0 0; display: flex; align-items: center; justify-content: center; padding-bottom: 8px; }
.active::before, .active::after { content: ""; position: absolute; bottom: 0; width: 14px; height: 14px; }
.active::before { left: -14px; background: radial-gradient(circle at 0 0, transparent 13.5px, #303c2d 14px); }
.active::after { right: -14px; background: radial-gradient(circle at 100% 0, transparent 13.5px, #303c2d 14px); }
.tabs { display: flex; height: 20px; background-repeat: repeat-x; }
.wide { margin-left: 4.1px; background-image: linear-gradient(90deg, #303c2d 1px, transparent 1px, transparent 20.27px, #303c2d 20.27px); background-size: 21.27px 20px; }
.wide .fav { margin: 0 .635px; }
.narrow { margin-left: -2px; background-image: linear-gradient(90deg, #303c2d 1px, transparent 1px, transparent 19px, #303c2d 19px); background-size: 20px 20px; }
.newtab { width: 14px; height: 14px; margin-left: 15px; }
.winctl { margin: 0 -2px 0 auto; display: flex; }
.winctl svg { width: 57px; height: 16px; }
.toolbar { height: 58px; display: flex; align-items: center; padding-left: 18.5px; }
.nav { display: flex; gap: 29.5px; width: 130.5px; }
.nav svg { width: 16px; height: 16px; }
.omnibox { width: 1510px; height: 42px; border-radius: 21px; background: #1c281a; display: flex; align-items: center; padding: 0 19px 0 6px; }
.site { width: 30px; height: 30px; border-radius: 50%; background: #303c2d; display: flex; align-items: center; justify-content: center; }
.url { margin-left: 10px; font: 17.5px "Open Sans", "Noto Sans", sans-serif; letter-spacing: -.37px; color: #bdcbb9; }
.url b { font-weight: 400; color: #e6efe3; }
.bookmark { width: 21px; height: 21px; margin-left: auto; fill: #c9d8c5; color: #c9d8c5; }
.actions { display: flex; align-items: center; padding-left: 22px; }
.actions svg:nth-child(2) { margin-left: 25px; }
.vline { width: 2px; height: 20px; background: #4b5f49; }
.actions .vline { margin: 0 23px 0 21px; }
.profile { width: 25px; height: 25px; margin: 0 23px 0 22px; border-radius: 50%; background: #5c6bc0; color: #fff; font: 500 13px/25px Roboto, sans-serif; text-align: center; }
.bookmarks { height: 34px; margin-top: -1px; display: flex; align-items: center; padding: 0 16px 0 14px; }
.bookmarks .vline { margin-left: auto; }
.folder { margin: 0 10px 0 20px; }
.allbm { font: 15px "Open Sans", "Noto Sans", sans-serif; letter-spacing: -.48px; color: #c9d5c5; }

/* App shell */
.app { flex: 1; display: flex; flex-direction: column; fill: #5f6368; color: #444746; }
.top { height: 80px; display: flex; align-items: center; }
.i30 { width: 30px; height: 30px; }
.i25 { width: 25px; height: 25px; }
.i22 { width: 22px; height: 22px; }
.dark { fill: #444746; color: #444746; }
.flip { transform: scaleX(-1); }
.brand { width: 319px; display: flex; align-items: center; padding-left: 29px; }
.logo { width: 38px; height: 28.5px; margin-left: 21px; }
.wordmark { margin-left: 13px; font-size: 28px; letter-spacing: -.6px; color: #444746; }
.search { width: 900px; height: 60px; border-radius: 30px; background: #e9eef6; display: flex; align-items: center; padding: 0 20px 0 15px; fill: #444746; font-size: 20px; letter-spacing: -.4px; color: #5f6368; }
.search span { margin-left: 10px; margin-right: auto; }
.hicons { display: flex; align-items: center; margin-left: auto; padding-right: 19px; }
.hicons svg + svg { margin-left: 23px; }
.hicons svg:nth-child(2) { margin-left: 25px; }
.hicons svg:nth-child(3) { margin-left: 22px; }
.avatar { flex: none; width: 50px; height: 50px; border-radius: 50%; background: #bf360c; color: #fff; font: 500 27px/51px Roboto, sans-serif; text-align: center; }
.avatar.small { width: 40px; height: 40px; margin-left: 25px; font-size: 23px; line-height: 41px; }
.main { flex: 1; display: flex; }
.side { width: 319px; padding-top: 10px; font-size: 17.5px; color: #1f1f1f; }
.compose { display: flex; align-items: center; width: 178px; height: 70px; margin: 0 0 20px 9px; padding-left: 20px; border-radius: 20px; background: #c2e7ff; color: #001d35; font-weight: 500; }
.compose span { margin-left: 20px; padding-bottom: 2px; letter-spacing: -.35px; }
.row { display: flex; align-items: center; height: 40px; width: 299px; padding: 0 15px 0 32px; border-radius: 0 20px 20px 0; color: #1f1f1f; fill: #444746; }
.row span { margin-left: 22px; padding-bottom: 2px; letter-spacing: -.5px; }
.row .snoozed { letter-spacing: -.6px; }
.row svg { color: #444746; }
.row em { margin-left: auto; padding-bottom: 1px; font-style: normal; font-size: 15px; letter-spacing: -.3px; font-weight: 400; color: #5f6368; }
.low { margin-top: 3px; }
.current { background: #d3e3fd; fill: #041e49; }
.current span, .current em { font-weight: 600; color: #001d35; }
.row.current em { letter-spacing: -.4px; }
.row.current span { letter-spacing: -.1px; }
.row.bold span { font-weight: 600; letter-spacing: 0; }
.labels { display: flex; justify-content: space-between; align-items: center; margin-top: 34px; height: 26px; padding: 0 32px 0 32px; font-size: 20px; letter-spacing: -.2px; color: #1f1f1f; }
.lplus { width: 21px; height: 21px; color: #444746; }

/* Reading pane */
.panel { width: 1533px; background: #fff; border-radius: 20px 20px 0 0; }
.mailbar { height: 60px; display: flex; align-items: center; padding: 0 42px 0 21px; color: #5f6368; }
.left { display: flex; align-items: center; margin-right: auto; }
.left .gap { margin-left: 47px; }
.left .gap ~ svg { margin-left: 30px; }
.divider { width: 1px; height: 25px; margin-left: 24px; background: #e0e3e7; }
.left .divider + svg { margin-left: 25px; }
.left .gap ~ svg:last-child { margin-left: 27px; }
.count { font-size: 15px; letter-spacing: -.5px; margin-right: 28px; }
.off { opacity: .45; }
.next { margin-left: 27px; color: #444746; }
.subject { display: flex; align-items: center; height: 86px; padding: 0 39px 0 92px; }
.clock { width: 29px; height: 31px; }
h1 { margin: 0 0 0 8px; font-size: 27px; line-height: 36px; font-weight: 400; letter-spacing: -.61px; color: #1f1f1f; }
.chip { height: 22px; margin-left: 14px; padding: 0 6px 0 5px; border-radius: 5px; background: #e1e3e1; display: flex; align-items: center; gap: 7px; font-size: 14.5px; letter-spacing: -.25px; color: #444746; }
.subicons { display: flex; gap: 20px; margin-left: auto; }
.message { display: flex; padding: 0 42px 0 20px; }
.content { flex: 1; margin-left: 20px; }
.meta { display: flex; align-items: flex-start; height: 61px; }
.who strong { display: block; font-size: 17px; line-height: 24px; font-weight: 600; letter-spacing: .11px; color: #1f1f1f; }
.to { display: flex; align-items: center; gap: 8px; height: 26px; font-size: 15px; letter-spacing: -.35px; color: #5f6368; }
.caret { border: 5px solid transparent; border-top-color: #444746; border-bottom: 0; }
time { margin-left: auto; font-size: 15px; line-height: 24px; letter-spacing: -.45px; color: #5f6368; }
.macts { display: flex; align-items: center; gap: 25px; height: 25px; margin-left: 25px; }
.macts svg:last-child { margin-left: 2px; margin-right: -1px; }
.body { font: 16px/24.6px "Liberation Sans", Arial, sans-serif; letter-spacing: .1px; color: #222; }
.body p { margin: 0; height: 24.6px; display: flex; align-items: center; }
.body p svg { width: 20px; height: 20px; margin: 2px 4px 0 0; letter-spacing: 0; }
.buttons { display: flex; gap: 10px; margin-top: 70.4px; }
.pill { height: 45px; border: 1px solid #747775; border-radius: 23px; display: flex; align-items: center; font-size: 17.5px; font-weight: 500; letter-spacing: -.15px; color: #444746; }
.pill span { padding-bottom: 2px; }
.pill svg { color: #444746; }
.pill .i22 { margin-right: 11px; }
.rep { width: 130px; padding-left: 23px; }
.fwd { width: 139px; padding-left: 17px; }
.round { width: 45px; justify-content: center; }

/* Side rail */
.rail { flex: 1; display: flex; flex-direction: column; align-items: center; padding-top: 24px; padding-left: 3px; gap: 46px; }
.rail svg { width: 24px; height: 24px; }
.rail i { width: 25px; height: 1px; margin-top: -4px; background: #dadce0; }
.rail .rplus { margin-top: -3px; }
```
